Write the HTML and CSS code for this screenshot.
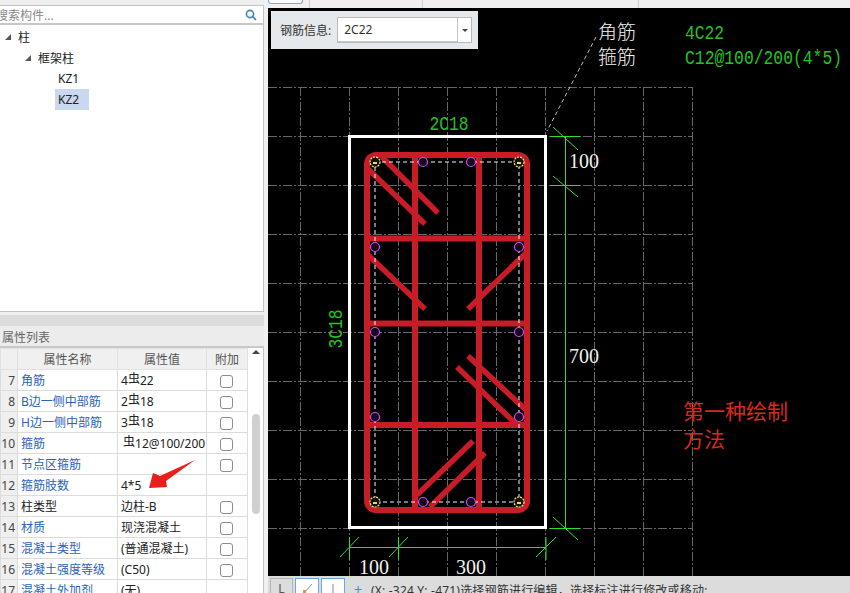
FILE: index.html
```html
<!DOCTYPE html>
<html lang="zh">
<head>
<meta charset="utf-8">
<title>钢筋信息</title>
<link rel="stylesheet" href="styles.css">
</head>
<body>
<div class="app">
  <aside class="side">
    <div class="side-top"></div>
    <div class="search">
      <span class="search-text">搜索构件...</span>
      <svg class="search-icon" width="12" height="12" viewBox="0 0 12 12"><circle cx="5" cy="5" r="3.6"/><path d="M7.6 7.6L11 11"/></svg>
    </div>
    <div class="tree">
      <div class="node"><span class="tri"></span>柱</div>
      <div class="node lvl1"><span class="tri"></span>框架柱</div>
      <div class="node lvl2"><span class="leaf">KZ1</span></div>
      <div class="node lvl2"><span class="leaf sel">KZ2</span></div>
    </div>
    <div class="split"></div>
    <div class="prop-title">属性列表</div>
    <div class="prop-body">
      <table class="grid">
        <colgroup><col class="c-no"><col class="c-name"><col class="c-val"><col class="c-add"></colgroup>
        <thead><tr><th></th><th>属性名称</th><th>属性值</th><th>附加</th></tr></thead>
        <tbody>
          <tr><td class="no">7</td><td class="lnk">角筋</td><td>4<span class="bar">虫</span>22</td><td class="chk"><span class="box"></span></td></tr>
          <tr><td class="no">8</td><td class="lnk">B边一侧中部筋</td><td>2<span class="bar">虫</span>18</td><td class="chk"><span class="box"></span></td></tr>
          <tr><td class="no">9</td><td class="lnk">H边一侧中部筋</td><td>3<span class="bar">虫</span>18</td><td class="chk"><span class="box"></span></td></tr>
          <tr><td class="no">10</td><td class="lnk">箍筋</td><td class="ind"><span class="bar">虫</span>12@100/200</td><td class="chk"><span class="box"></span></td></tr>
          <tr><td class="no">11</td><td class="lnk">节点区箍筋</td><td></td><td class="chk"><span class="box"></span></td></tr>
          <tr><td class="no">12</td><td class="lnk">箍筋肢数</td><td>4*5</td><td class="chk"></td></tr>
          <tr><td class="no">13</td><td>柱类型</td><td>边柱-B</td><td class="chk"><span class="box"></span></td></tr>
          <tr><td class="no">14</td><td class="lnk">材质</td><td>现浇混凝土</td><td class="chk"><span class="box"></span></td></tr>
          <tr><td class="no">15</td><td class="lnk">混凝土类型</td><td>(普通混凝土)</td><td class="chk"><span class="box"></span></td></tr>
          <tr><td class="no">16</td><td class="lnk">混凝土强度等级</td><td>(C50)</td><td class="chk"><span class="box"></span></td></tr>
          <tr><td class="no">17</td><td class="lnk">混凝土外加剂</td><td>(无)</td><td class="chk"></td></tr>
        </tbody>
      </table>
      <div class="scroll">
        <span class="scroll-up"></span>
        <span class="scroll-thumb"></span>
      </div>
    </div>
    <svg class="arrow" width="50" height="32" viewBox="147 458 50 32"><path d="M149 488L153 473L160 476L195 460L166 481L167 487Z"/></svg>
  </aside>

  <main class="main">
    <div class="tabs">
      <span class="tab"></span>
      <span class="sep sep1"></span>
      <span class="sep sep2"></span>
      <span class="sep sep3"></span>
    </div>
    <div class="canvas">
      <svg class="draw" width="582" height="568" viewBox="268 8 582 568">
        <path class="gridline" d="M300.5 87V576M349.5 87V576M398.5 87V576M447.5 87V576M496.5 87V576M545.5 87V576M594.5 87V576M643.5 87V576M692.5 87V576M268 87.5H692M268 136.5H692M268 185.5H692M268 234.5H692M268 283.5H692M268 332.5H692M268 381.5H692M268 430.5H692M268 479.5H692M268 528.5H692"/>
        <path class="leader" d="M596 37L547 131"/>
        <rect class="outline" x="349.5" y="136.5" width="196" height="391"/>

        <path class="dim" d="M565.5 136V528M550 136.5H580M550 185.5H580M550 528.5H580M553 127L578 150M553 176L578 197M553 517L578 540M349.5 547.5H546M349.5 537V560M398.5 537V560M546 537V560M340 557L359 537M389 557L408 537M536 557L556 537"/>

        <rect class="stirrup" x="367" y="155" width="160" height="355" rx="9"/>
        <path class="rebar" d="M415 155V510M479 155V510M367 238.5H527M367 323.5H527M367 425H527"/>
        <path class="hook" d="M367 168L425 224M382 157L438 213M367 254L425 309M468 309L526 253M468 356L526 410M457 367L517 425M473 441L417 495M485 453L430 507"/>

        <rect class="tie" x="375" y="162" width="144" height="340"/>
        <g class="bar-pink">
          <circle cx="423" cy="162" r="4.5"/><circle cx="471" cy="162" r="4.5"/>
          <circle cx="375" cy="247" r="4.5"/><circle cx="519" cy="247" r="4.5"/>
          <circle cx="375" cy="332" r="4.5"/><circle cx="519" cy="332" r="4.5"/>
          <circle cx="375" cy="417" r="4.5"/><circle cx="519" cy="417" r="4.5"/>
          <circle cx="423" cy="502" r="4.5"/><circle cx="471" cy="502" r="4.5"/>
        </g>
        <g class="bar-yellow">
          <circle cx="375" cy="162" r="5"/><circle cx="519" cy="162" r="5"/>
          <circle cx="375" cy="502" r="5"/><circle cx="519" cy="502" r="5"/>
        </g>
        <path class="bar-mark" d="M373 163H377M517 163H521M373 503H377M517 503H521"/>

        <text class="t-green" x="449" y="130" text-anchor="middle" textLength="39" lengthAdjust="spacingAndGlyphs">2C18</text>
        <text class="t-green" x="342" y="329" text-anchor="middle" textLength="39" lengthAdjust="spacingAndGlyphs" transform="rotate(-90 342 329)">3C18</text>
        <text class="t-white" x="569" y="168" textLength="30">100</text>
        <text class="t-white" x="569" y="363" textLength="30">700</text>
        <text class="t-white" x="359" y="574" textLength="30">100</text>
        <text class="t-white" x="456" y="574" textLength="30">300</text>
        <text class="t-cjk" x="598" y="39">角筋</text>
        <text class="t-cjk" x="598" y="64">箍筋</text>
        <text class="t-green" x="685" y="39" textLength="39" lengthAdjust="spacingAndGlyphs">4C22</text>
        <text class="t-green" x="685" y="64" textLength="157" lengthAdjust="spacingAndGlyphs">C12@100/200(4*5)</text>
        <text class="t-red" x="683" y="419">第一种绘制</text>
        <text class="t-red" x="683" y="447">方法</text>
      </svg>
      <div class="info">
        <span class="info-label">钢筋信息:</span>
        <div class="combo">
          <span class="combo-val">2C22</span>
          <span class="combo-btn"><span class="combo-caret"></span></span>
        </div>
      </div>
    </div>
    <div class="status">
      <span class="tool tool-off">L</span>
      <span class="tool tool-on"><svg width="12" height="12" viewBox="0 0 12 12"><path class="ic-line" d="M3 11L11 2"/><rect class="ic-dot" x="2" y="8" width="3" height="3"/></svg></span>
      <span class="tool tool-on"><svg width="12" height="12" viewBox="0 0 12 12"><path class="ic-line" d="M6 2V12"/></svg></span>
      <span class="plus">+</span>
      <span class="msg">(X: -324 Y: -471)选择钢筋进行编辑，选择标注进行修改或移动;</span>
    </div>
  </main>
</div>
</body>
</html>
```

FILE: styles.css
```css
* { box-sizing: border-box; }
html, body { margin: 0; height: 100%; overflow: hidden; }
body { font-family: "Noto Sans", "Noto Sans CJK SC", sans-serif; font-size: 12px; color: #222; background: #f0f0f0; }
.app { display: flex; width: 850px; height: 593px; overflow: hidden; }

.side { position: relative; flex: 0 0 268px; display: flex; flex-direction: column; padding-right: 4px; background: #f0f0f0; overflow: hidden; }
.side-top { flex: none; height: 6px; background: #efefef; border-bottom: 1px solid #c4c4c4; }
.search { flex: none; height: 19px; display: flex; align-items: center; justify-content: space-between; padding-right: 6px; background: #fff; border-bottom: 2px solid #c8c8c8; border-right: 1px solid #c4c4c4; overflow: hidden; }
.search-text { margin-left: -4px; color: #8a8a8a; white-space: nowrap; }
.search-icon { fill: none; stroke: #3c86b4; stroke-width: 1.6; }
.tree { flex: none; height: 287px; padding-top: 1px; background: #fff; border-right: 1px solid #c4c4c4; border-bottom: 1px solid #c4c4c4; }
.node { display: flex; align-items: center; height: 21px; padding-left: 5px; color: #222; }
.lvl1 { padding-left: 25px; }
.lvl2 { padding-left: 55px; }
.tri { width: 0; height: 0; margin-right: 7px; border-left: 6px solid transparent; border-bottom: 6px solid #555; }
.leaf { display: block; padding: 0 3px; line-height: 21px; }
.sel { background: #c9d8ee; width: 34px; }
.split { flex: none; height: 14px; background: linear-gradient(#efefef 0 3px, #dcdcdc 3px); }
.prop-title { flex: none; height: 22px; line-height: 23px; padding-left: 2px; background: #ececec; border-bottom: 2px solid #c8c8c8; color: #666; }
.prop-body { flex: 1; display: flex; min-height: 0; background: #fff; border-right: 1px solid #c4c4c4; overflow: hidden; }

.grid { flex: 0 0 247px; width: 247px; height: 0; table-layout: fixed; border-collapse: collapse; }
.c-no { width: 17px; }
.c-name { width: 100px; }
.c-val { width: 89px; }
.c-add { width: 41px; }
.grid th { height: 21px; padding: 0; font-weight: 400; color: #555; text-align: center; background: #f0f0f0; border: 1px solid #e2e2e2; white-space: nowrap; overflow: hidden; }
.grid td { height: 21px; padding: 0 0 0 3px; border: 1px solid #dcdcdc; color: #222; white-space: nowrap; overflow: hidden; }
.grid td.no { padding: 0 2px 0 0; text-align: right; background: #efefef; color: #444; }
.grid td.lnk { color: #2c62b8; }
.grid td.ind { padding-left: 5px; }
.grid td.chk { padding: 0 1px 0 0; text-align: center; }
.bar { position: relative; top: -2px; margin: 0; font-size: 12px; }
.box { display: inline-block; width: 13px; height: 13px; vertical-align: middle; background: #fff; border: 1px solid #8c8c8c; border-radius: 3px; }

.scroll { flex: 1; display: flex; flex-direction: column; align-items: center; background: #fff; }
.scroll-up { margin-top: 2px; width: 0; height: 0; border: 4px solid transparent; border-top: 0; border-bottom: 4px solid #444; }
.scroll-thumb { margin-top: 60px; width: 8px; height: 100px; border-radius: 4px; background: #d0d0d0; }
.arrow { position: absolute; left: 147px; top: 458px; }
.arrow path { fill: #ea1f1a; }

.main { flex: 1; display: flex; flex-direction: column; min-width: 0; }
.tabs { position: relative; flex: none; height: 8px; background: #f0f0f0; }
.tab { display: block; width: 35px; height: 4px; background: #fff; border: 1px solid #7fa9d8; border-top: 0; border-radius: 0 0 3px 3px; }
.sep { position: absolute; top: 0; width: 1px; height: 8px; background: #cfcfcf; }
.sep1 { left: 41px; }
.sep2 { left: 154px; }
.sep3 { left: 370px; }

.canvas { position: relative; flex: 1; min-height: 0; background: #000; overflow: hidden; }
.draw { display: block; }
.gridline { fill: none; stroke: #666; stroke-width: 1; stroke-dasharray: 9 2 2 2; }
.leader { fill: none; stroke: #bdbdbd; stroke-width: 1; stroke-dasharray: 4 3; }
.outline { fill: none; stroke: #fff; stroke-width: 3; }
.dim { fill: none; stroke: #2be02b; stroke-width: 1; }
.stirrup { fill: none; stroke: #c81c26; stroke-width: 6; }
.rebar { fill: none; stroke: #c81c26; stroke-width: 6; }
.hook { fill: none; stroke: #c81c26; stroke-width: 5.5; }
.tie { fill: none; stroke: #eef4ff; stroke-width: 1; stroke-dasharray: 4 3; }
.bar-pink circle { fill: #14081c; stroke: #d44af5; stroke-width: 1.2; }
.bar-yellow circle { fill: #14100a; stroke: #f5ec82; stroke-width: 1.2; stroke-dasharray: 2 1; }
.bar-mark { fill: none; stroke: #e8dc70; stroke-width: 2; }
.t-green { font-family: "Liberation Mono", monospace; font-size: 20px; fill: #23c423; }
.t-white { font-family: "Liberation Serif", serif; font-size: 20px; fill: #f2f2f2; }
.t-cjk { font-family: "Noto Sans CJK SC", sans-serif; font-size: 19px; font-weight: 300; fill: #f2f2f2; }
.t-red { font-family: "Noto Sans CJK SC", sans-serif; font-size: 21px; fill: #d9281f; }

.info { position: absolute; left: 3px; top: 3px; width: 207px; height: 38px; display: flex; align-items: center; gap: 6px; padding-left: 9px; background: #e6e9eb; }
.info-label { color: #333; white-space: nowrap; }
.combo { display: flex; width: 135px; height: 26px; background: #fff; border: 1px solid #b9b9b9; }
.combo-val { flex: 1; padding-left: 6px; line-height: 24px; color: #333; border-right: 1px solid #c8c8c8; border-bottom: 1px solid #c8c8c8; }
.combo-btn { flex: 0 0 13px; display: flex; align-items: center; justify-content: center; }
.combo-caret { width: 0; height: 0; border: 3px solid transparent; border-bottom: 0; border-top: 3px solid #444; }

.status { flex: none; height: 17px; display: flex; align-items: flex-start; gap: 2px; padding: 2px 0 0 2px; background: #dcdcdc; overflow: hidden; }
.tool { flex: none; display: flex; justify-content: center; align-items: center; width: 24px; height: 20px; border: 1px solid #b5b5b5; color: #555; }
.tool-off { background: #dcdcdc; width: 23px; }
.tool-on { background: #fff; border-color: #6ea6de; }
.ic-line { fill: none; stroke: #8a8a8a; }
.ic-dot { fill: #e2914c; }
.plus { flex: none; width: 22px; padding-top: 1px; text-align: center; font-size: 15px; line-height: 20px; color: #4a8fd0; }
.msg { flex: none; margin-top: 4px; line-height: 18px; letter-spacing: .2px; color: #333; white-space: nowrap; }
```
